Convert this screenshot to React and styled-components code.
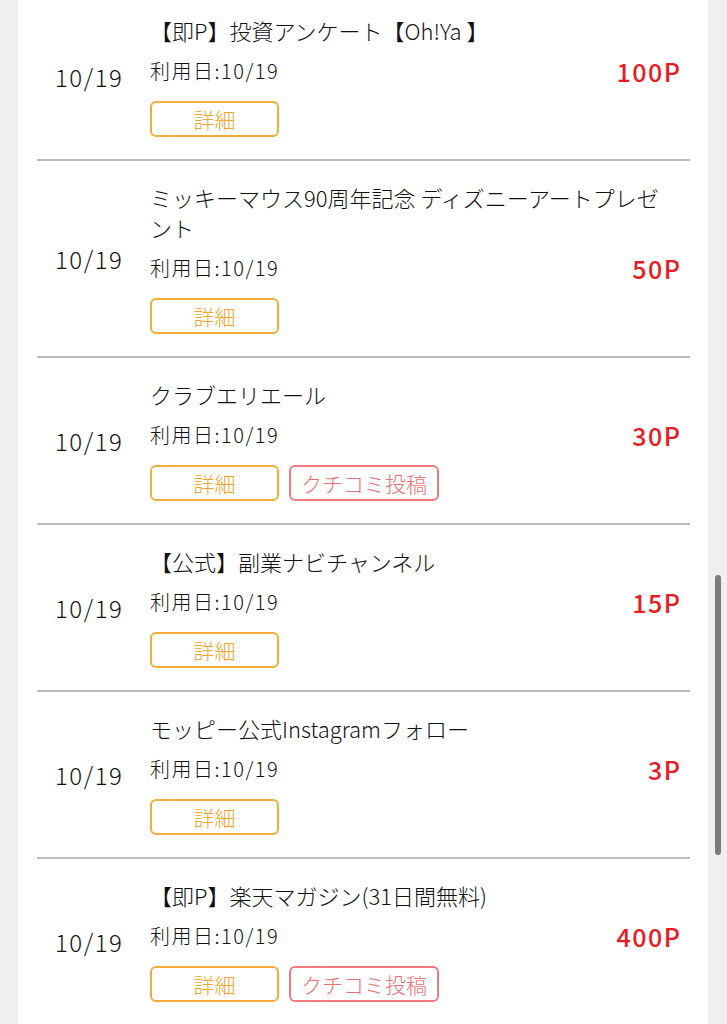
import React from "react";
import styled, { createGlobalStyle } from "styled-components";

const Global = createGlobalStyle`
  html, body {
    margin: 0;
    padding: 0;
    height: 100%;
    overflow: hidden;
    background: #efefef;
  }
  body {
    font-family: "Noto Sans CJK JP", "Noto Sans", sans-serif;
    color: #111;
  }
`;

const Panel = styled.main`
  margin-left: 18px;
  width: 690px;
  min-height: 100vh;
  background: #fff;
`;

const List = styled.div`
  margin-top: -8px;
`;

const Row = styled.div`
  display: flex;
  align-items: center;
  margin: 0 18px 0 19px;
  border-top: 2px solid #bcbcbc;
  padding: 21px 10px 22px 0;
`;

const DateCol = styled.div`
  width: 113px;
  flex: none;
  box-sizing: border-box;
  padding-left: 18px;
  font-size: 24px;
  font-weight: 300;
  letter-spacing: 1.5px;
  color: #111;
`;

const Body = styled.div`
  flex: 1;
  min-width: 0;
  display: flex;
  flex-direction: column;
`;

const Title = styled.div`
  font-size: 22px;
  line-height: 30px;
  font-weight: 300;
  color: #111;
`;

const Meta = styled.div`
  margin-top: 10px;
  height: 30px;
  display: flex;
  align-items: center;
  justify-content: space-between;
`;

const UseDate = styled.span`
  font-size: 20px;
  font-weight: 300;
  letter-spacing: 1.5px;
  color: #111;
`;

const Points = styled.span`
  font-size: 25px;
  font-weight: 500;
  color: #ec1a23;
  padding-top: 2px;
  letter-spacing: 1.5px;
  margin-right: -1.5px;
`;

const Buttons = styled.div`
  margin-top: 16px;
  display: flex;
  gap: 10px;
`;

const Btn = styled.button`
  box-sizing: border-box;
  height: 36px;
  min-width: ${(p) => (p.$wide ? "auto" : "129px")};
  padding: 0 ${(p) => (p.$wide ? "10px" : "0")};
  background: #fff;
  border: 2px solid ${(p) => (p.$review ? "#f07a7d" : "#f7ac3a")};
  border-radius: 6px;
  color: ${(p) => (p.$review ? "#ee6f72" : "#f5a42c")};
  font-family: "Noto Sans CJK JP", "Noto Sans", sans-serif;
  font-size: 21px;
  font-weight: 300;
  line-height: 1;
  display: flex;
  align-items: center;
  justify-content: center;
`;

const Thumb = styled.div`
  position: fixed;
  right: 6px;
  top: 575px;
  width: 6px;
  height: 280px;
  border-radius: 3px;
  background: #7b7b7b;
`;

const items = [
  { title: "【即P】投資アンケート【Oh!Ya 】", pts: "100P", review: false },
  {
    title: "ミッキーマウス90周年記念 ディズニーアートプレゼント",
    pts: "50P",
    review: false,
  },
  { title: "クラブエリエール", pts: "30P", review: true },
  { title: "【公式】副業ナビチャンネル", pts: "15P", review: false },
  { title: "モッピー公式Instagramフォロー", pts: "3P", review: false },
  { title: "【即P】楽天マガジン(31日間無料)", pts: "400P", review: true },
];

export default function App() {
  return (
    <>
      <Global />
      <Panel>
        <List>
          {items.map((it, i) => (
            <Row key={i}>
              <DateCol>10/19</DateCol>
              <Body>
                <Title>{it.title}</Title>
                <Meta>
                  <UseDate>利用日:10/19</UseDate>
                  <Points>{it.pts}</Points>
                </Meta>
                <Buttons>
                  <Btn>詳細</Btn>
                  {it.review && (
                    <Btn $review $wide>
                      クチコミ投稿
                    </Btn>
                  )}
                </Buttons>
              </Body>
            </Row>
          ))}
        </List>
      </Panel>
      <Thumb />
    </>
  );
}
